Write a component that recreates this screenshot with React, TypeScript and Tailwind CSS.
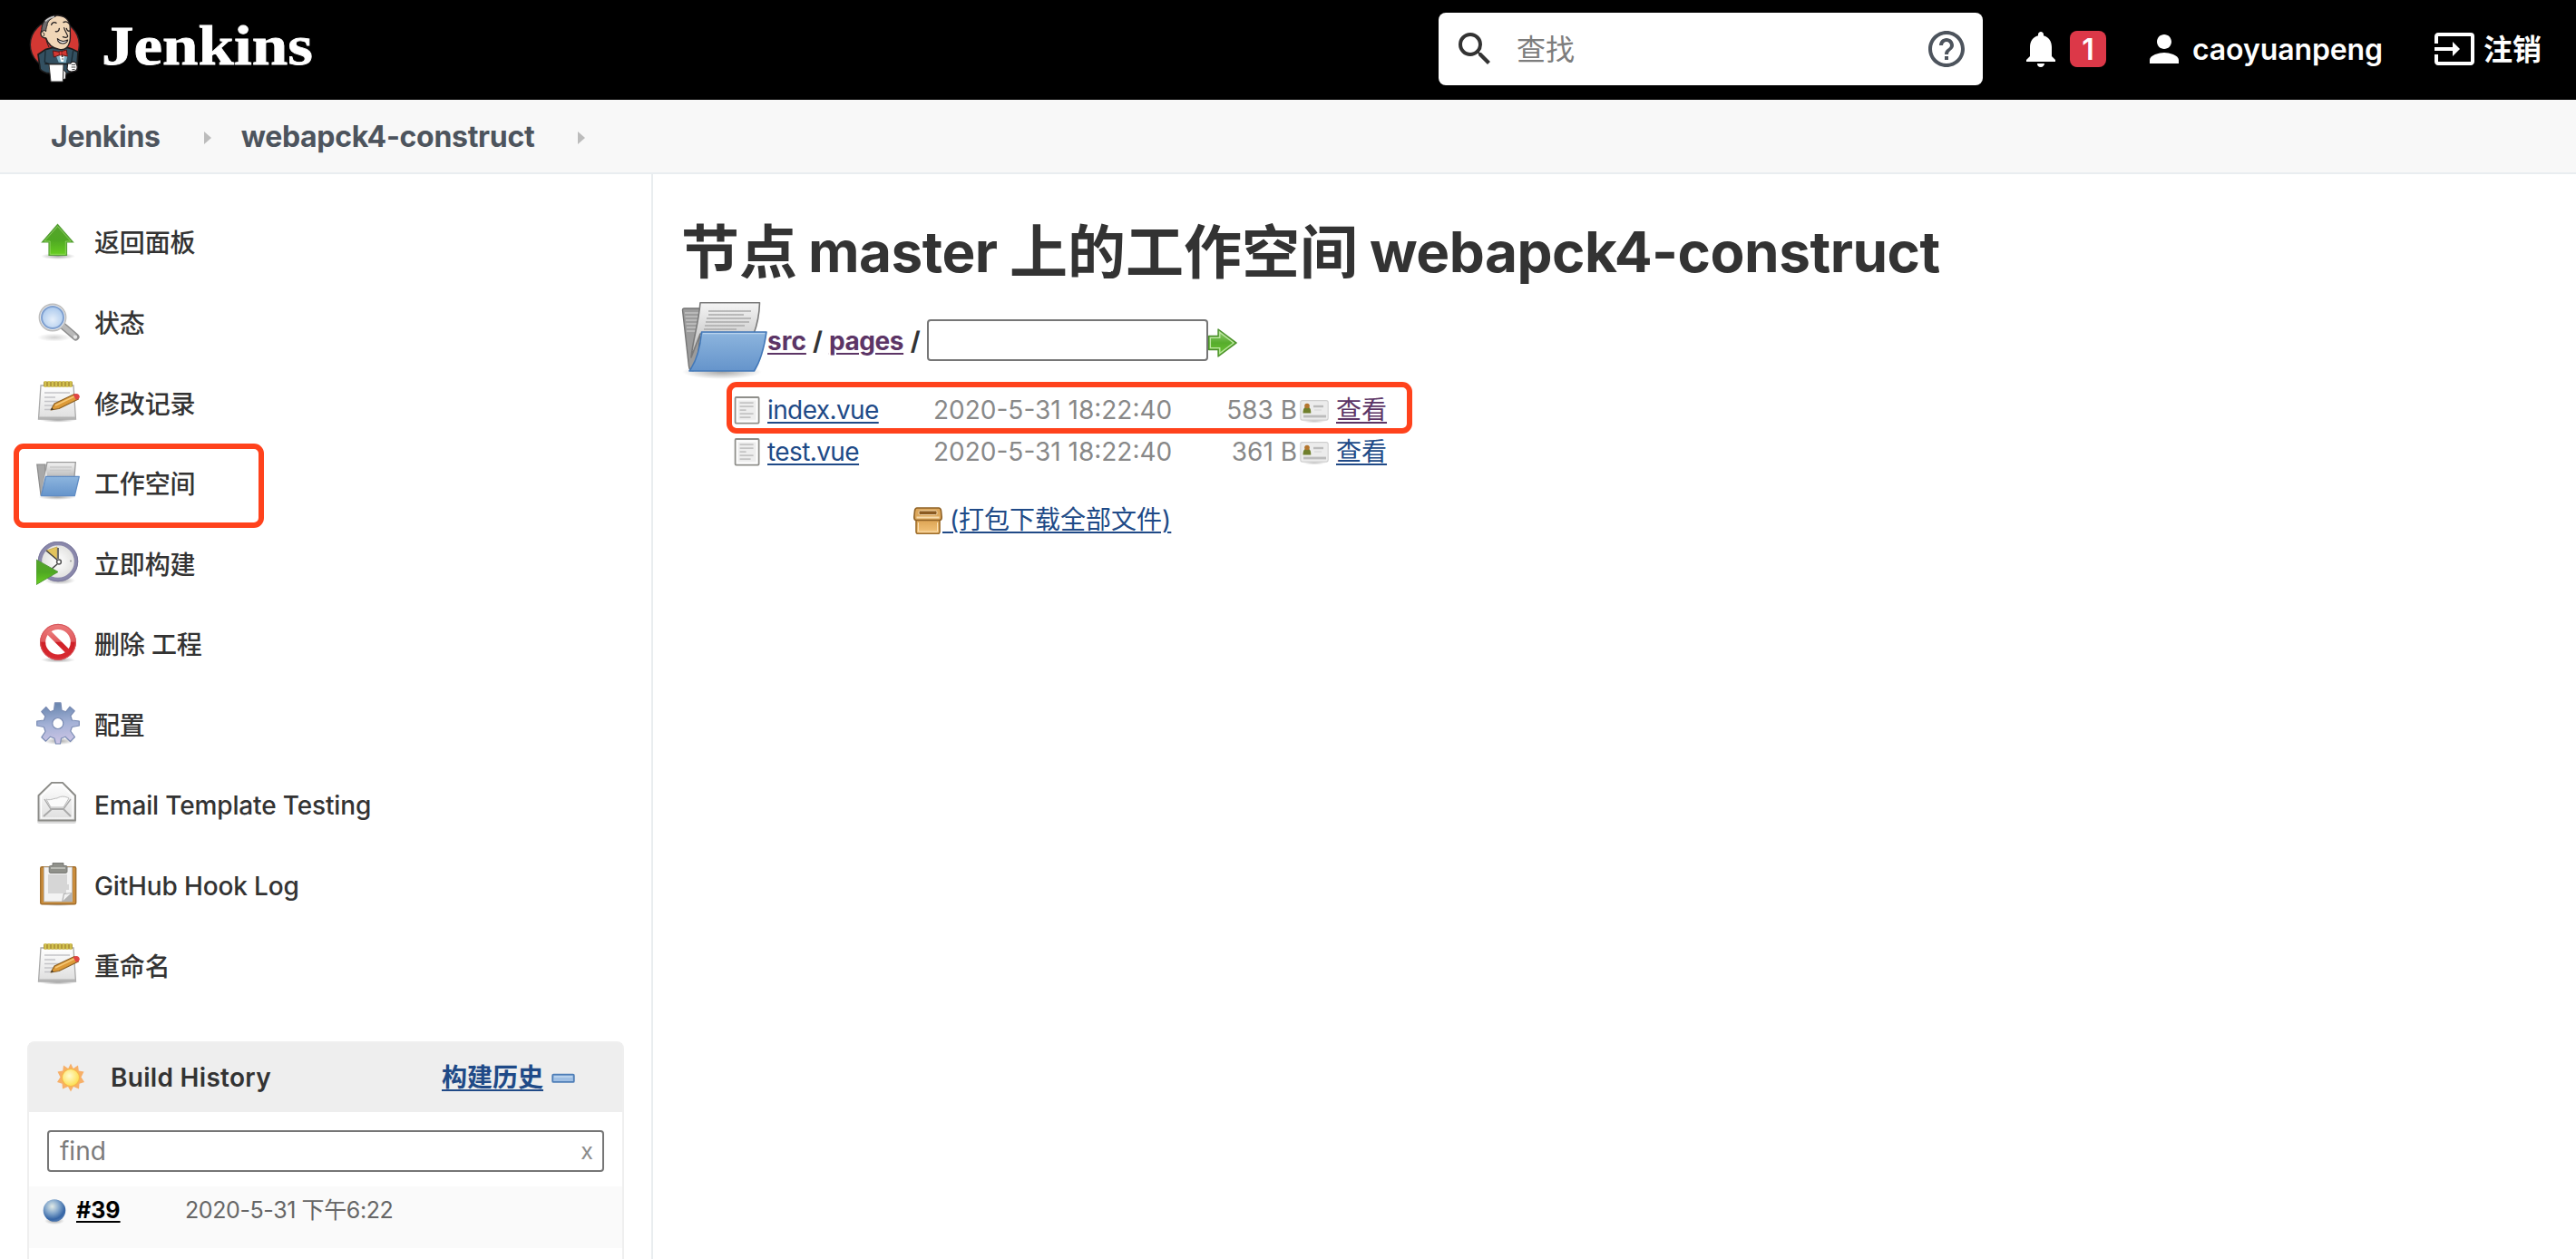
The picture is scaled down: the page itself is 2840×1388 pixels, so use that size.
import type { ReactNode } from "react";
import { MdHelpOutline, MdInput, MdNotifications, MdPerson, MdSearch } from "react-icons/md";

/* ---------- icons ---------- */

function JenkinsLogo() {
  return (
    <svg viewBox="0 0 270 330" className="h-[110px] w-[90px] shrink-0">
      <ellipse cx="121" cy="148" rx="81" ry="80" fill="#d33833" stroke="#231f20" strokeWidth="4" />
      <path d="M66 180 L90 164 L112 158 L165 158 L178 162 L198 172 L194 232 L160 244 L96 242 C84 238 70 230 72 222 Z" fill="#335061" stroke="#1c1c1c" strokeWidth="5" strokeLinejoin="round" />
      <path d="M90 168 L88 205 L102 212 M182 168 L176 206" fill="none" stroke="#1a2b35" strokeWidth="4" />
      <path d="M122 176 L164 180 L158 208 L134 206 Z" fill="#81b0c4" />
      <path d="M136 182 L153 182 L150 204 L142 204 Z" fill="#fff" />
      <circle cx="146" cy="186" r="3" fill="#222" />
      <circle cx="147" cy="195" r="2" fill="#222" />
      <path d="M79 96 C78 66 104 50 132 51 C158 53 173 70 172 98 C172 112 174 126 170 140 C165 158 152 166 136 163 C118 160 100 150 92 126 C82 126 74 120 75 110 C76 102 80 98 84 100 Z" fill="#f0d6b7" stroke="#231f20" strokeWidth="4" strokeLinejoin="round" />
      <path d="M78 106 C76 84 84 66 104 58 C114 54 120 54 124 54 C106 62 96 72 96 84 C94 90 92 94 92 104 L86 100 Z" fill="#6d6b6d" stroke="#231f20" strokeWidth="3" />
      <path d="M90 70 C98 61 108 57 120 55" fill="none" stroke="#c9c9c9" strokeWidth="5" />
      <path d="M82 108 C86 108 88 114 84 120 M92 126 C94 138 98 148 102 156" fill="none" stroke="#231f20" strokeWidth="3" />
      <path d="M110 82 C112 74 120 72 126 76 M150 74 C156 70 164 72 168 78 M124 104 C130 106 136 102 136 94 M160 94 C162 102 166 104 171 102" fill="none" stroke="#231f20" strokeWidth="4" strokeLinecap="round" />
      <path d="M152 92 C154 102 162 112 164 120 C162 126 154 124 148 122" fill="none" stroke="#231f20" strokeWidth="3.5" strokeLinecap="round" />
      <path d="M130 128 C140 138 154 138 164 132 C162 146 140 148 132 136 Z" fill="#fff" stroke="#231f20" strokeWidth="3.5" strokeLinejoin="round" />
      <path d="M115 168 L136 172 L160 165 L163 186 L140 181 L118 189 Z" fill="#d33833" stroke="#5c1512" strokeWidth="3" strokeLinejoin="round" />
      <path d="M136 170 L144 170 L144 183 L136 183 Z" fill="#ef3d3a" stroke="#5c1512" strokeWidth="2" />
      <path d="M88 211 L162 212" stroke="#1c1c1c" strokeWidth="4" />
      <path d="M146 226 L159 240 L157 260 L148 264 Z" fill="#e8e8e8" stroke="#231f20" strokeWidth="3" />
      <path d="M102 213 L150 213 L148 270 L108 270 Z" fill="#fff" stroke="#333" strokeWidth="3" strokeLinejoin="round" />
      <path d="M164 210 C170 208 174 214 176 206 C184 202 192 206 194 214 C198 226 194 236 184 236 C174 238 164 236 162 228 Z" fill="#fff" stroke="#231f20" strokeWidth="3.5" />
      <path d="M176 214 L190 214 M176 222 L190 222 M178 230 L188 229" stroke="#444" strokeWidth="3" />
    </svg>
  );
}

function Svg({ children, box = 48, className = "size-12" }: { children: ReactNode; box?: number; className?: string }) {
  return (
    <svg viewBox={`0 0 ${box} ${box}`} className={`shrink-0 ${className}`}>
      {children}
    </svg>
  );
}

function Gradients() {
  return (
    <svg className="absolute size-0">
      <defs>
        <linearGradient id="green" x1="0" y1="0" x2="0" y2="1"><stop offset="0" stopColor="#55a32c" /><stop offset="0.5" stopColor="#4fa823" /><stop offset="1" stopColor="#68cf20" /></linearGradient>
        <linearGradient id="greenRight" x1="0" y1="0" x2="0" y2="1"><stop offset="0" stopColor="#9ad07c" /><stop offset="0.5" stopColor="#57ad2c" /><stop offset="1" stopColor="#6cc832" /></linearGradient>
        <linearGradient id="blue" x1="0" y1="0" x2="0" y2="1"><stop offset="0" stopColor="#8db5de" /><stop offset="1" stopColor="#6594cb" /></linearGradient>
        <linearGradient id="paper" x1="0" y1="0" x2="0" y2="1"><stop offset="0" stopColor="#ffffff" /><stop offset="1" stopColor="#dedede" /></linearGradient>
        <linearGradient id="sheet" x1="0" y1="0" x2="0" y2="1"><stop offset="0" stopColor="#f4f4f4" /><stop offset="1" stopColor="#b8b8b8" /></linearGradient>
        <linearGradient id="red" x1="0" y1="0" x2="0" y2="1"><stop offset="0" stopColor="#ec7b7b" /><stop offset="0.48" stopColor="#e05a5e" /><stop offset="0.52" stopColor="#cf1f26" /><stop offset="1" stopColor="#d92c33" /></linearGradient>
        <linearGradient id="gear" x1="0.5" y1="0" x2="0.6" y2="1"><stop offset="0" stopColor="#6684ad" /><stop offset="0.5" stopColor="#a3b1d6" /><stop offset="1" stopColor="#cfc6e6" /></linearGradient>
        <linearGradient id="box" x1="0" y1="0" x2="0" y2="1"><stop offset="0" stopColor="#d99f4e" /><stop offset="1" stopColor="#f4c57c" /></linearGradient>
        <radialGradient id="glass" cx="0.5" cy="0.6" r="0.6"><stop offset="0" stopColor="#e6effa" /><stop offset="1" stopColor="#a9c8ec" /></radialGradient>
        <radialGradient id="clock" cx="0.5" cy="0.5" r="0.6"><stop offset="0" stopColor="#ffffff" /><stop offset="1" stopColor="#d9d9d6" /></radialGradient>
        <radialGradient id="ball" cx="0.4" cy="0.32" r="0.68"><stop offset="0" stopColor="#e2ebe6" /><stop offset="0.45" stopColor="#86a9cd" /><stop offset="0.85" stopColor="#3565a5" /><stop offset="1" stopColor="#4d78b0" /></radialGradient>
        <radialGradient id="sun" cx="0.42" cy="0.4" r="0.65"><stop offset="0" stopColor="#fffbd0" /><stop offset="1" stopColor="#fddc45" /></radialGradient>
        <radialGradient id="shadow"><stop offset="0" stopColor="#000" stopOpacity="0.35" /><stop offset="1" stopColor="#000" stopOpacity="0" /></radialGradient>
      </defs>
    </svg>
  );
}

const UpIcon = () => (
  <Svg>
    <ellipse cx="24" cy="40.5" rx="19" ry="3.5" fill="url(#shadow)" />
    <path d="M23.5 5.5 L40.5 25 H33.5 V39.5 H14 V25 H6.5 Z" fill="url(#green)" stroke="#57a037" strokeWidth="1.2" />
    <path d="M23.5 7.5 L38 24 H32.3 V38.3 H15.2 V24 H9 Z" fill="none" stroke="#a8e07c" strokeWidth="1" opacity="0.6" />
  </Svg>
);

const SearchIcon = () => (
  <Svg>
    <ellipse cx="20" cy="41" rx="19" ry="4.5" fill="url(#shadow)" opacity="0.5" />
    <path d="M29 28 L43.5 40.5" stroke="#8e8e8e" strokeWidth="8" strokeLinecap="round" />
    <path d="M29 28 L42 39.2" stroke="#b9b9b9" strokeWidth="5" />
    <circle cx="43" cy="40.5" r="2.2" fill="#e6e6e6" />
    <circle cx="18" cy="19" r="14.6" fill="#f2f2f2" stroke="#bdbdbd" strokeWidth="1.6" />
    <circle cx="18" cy="19" r="12" fill="url(#glass)" stroke="#7fa0d0" strokeWidth="2" />
  </Svg>
);

const NotepadIcon = () => (
  <Svg>
    <ellipse cx="24" cy="44" rx="20" ry="2.8" fill="url(#shadow)" />
    <path d="M5 6 H41 L43.5 43 H2.5 Z" fill="url(#paper)" stroke="#a9a9a9" strokeWidth="1.3" />
    <path d="M3 40.5 H43.3 L43.5 43 H2.5 Z" fill="#b4b4b4" />
    <rect x="8" y="1.5" width="32" height="6" rx="1" fill="#b39a3a" />
    <path d="M10 1 V8 M14 1 V8 M18 1 V8 M22 1 V8 M26 1 V8 M30 1 V8 M34 1 V8 M38 1 V8" stroke="#d9ca55" strokeWidth="1.6" />
    <path d="M9 14 H37 M9 19 H21 M9 23.5 H32 M9 28 H26 M9 32.5 H18" stroke="#c4c4c8" strokeWidth="1.6" />
    <path d="M16 33 L20 26 L42 15.5 L46.5 21 L25 31.5 Z" fill="#dd9a38" stroke="#8b5f22" strokeWidth="1.1" strokeLinejoin="round" />
    <path d="M21 28 L43 17.5" stroke="#f6c877" strokeWidth="1.5" />
    <path d="M40.5 16.3 L43.5 15 C47 14.5 49 18 46.8 20.6 L44 22 Z" fill="#e04545" />
    <path d="M16 33 L17.4 30.4 L19 32.4 Z" fill="#333" />
  </Svg>
);

const FolderIcon = () => (
  <Svg>
    <ellipse cx="23" cy="40" rx="21" ry="3" fill="url(#shadow)" />
    <path d="M0.8 4 H10 V16 L7 38 H5 Z" fill="#a8a8a8" stroke="#8a8a8a" strokeWidth="1.2" />
    <path d="M12 1.6 H43.3 L42 18 H9 Z" fill="url(#sheet)" stroke="#9a9a9a" strokeWidth="1.3" />
    <path d="M15 7 H39 M15 10.5 H38 M14 14 H36" stroke="#c9c9c9" strokeWidth="1.4" />
    <path d="M11 10 L12 17 L6 36 L9 18 Z" fill="#e8e8e8" />
    <path d="M10.5 17.4 H47.3 L42.3 38.6 H5.4 Z" fill="url(#blue)" stroke="#5f8cc4" strokeWidth="1.3" strokeLinejoin="round" />
  </Svg>
);

const BigFolderIcon = () => (
  <Svg box={96} className="size-24">
    <ellipse cx="46" cy="82" rx="44" ry="8" fill="url(#shadow)" />
    <path d="M2.5 14 Q2.5 12 4.5 12 H24 L20 60 L16 80 Q10 82 9.5 76 Z" fill="#9c9c9c" stroke="#737373" strokeWidth="1.4" />
    <path d="M5 17 H22 M5.5 21 H21.5 M6 25 H21 M6.5 29 H20 M7 33 H19 M7 37 H18" stroke="#c2c2c2" strokeWidth="1.4" />
    <path d="M22 5.8 H87.5 Q87 24 81 40 H22 L12 66 C14 46 20 30 22 5.8 Z" fill="url(#sheet)" stroke="#7a7a7a" strokeWidth="1.6" strokeLinejoin="round" />
    <path d="M31 15 H78 M31 19 H70 M29 23 H78 M28 27 H76 M27 31 H71 M26 35 H62" stroke="#aaaaaa" strokeWidth="1.5" />
    <path d="M23.5 38 H95 Q91 66 81.5 81 H10 Q21 66 23.5 38 Z" fill="url(#blue)" stroke="#4378b8" strokeWidth="1.6" strokeLinejoin="round" />
    <path d="M25 39.6 H93" stroke="#b9d3ee" strokeWidth="1.2" />
  </Svg>
);

const ClockIcon = () => (
  <Svg>
    <ellipse cx="26" cy="43" rx="17" ry="4.5" fill="url(#shadow)" />
    <circle cx="24" cy="22" r="20" fill="url(#clock)" stroke="#8a88ab" strokeWidth="4.4" />
    <circle cx="24" cy="22" r="21.7" fill="none" stroke="#77759a" strokeWidth="0.9" />
    <path d="M22.5 19.5 L11 10 L23 6 Z" fill="#e3c45c" stroke="#c7a94c" strokeWidth="0.8" />
    <path d="M11 10 L24 21 M24 7 V19" stroke="#444" strokeWidth="1.5" />
    <circle cx="25" cy="22.5" r="2.4" fill="#fff" stroke="#555" strokeWidth="1.5" />
    <path d="M23 25 L16 31" stroke="#444" strokeWidth="1.6" />
    <circle cx="38" cy="21.5" r="1" fill="#999" />
    <path d="M0 20 L24 33.5 L0 47.5 Z" fill="url(#green)" stroke="#54993a" strokeWidth="1" />
  </Svg>
);

const NoEntryIcon = () => (
  <Svg>
    <ellipse cx="24" cy="42.5" rx="19" ry="3.2" fill="url(#shadow)" />
    <circle cx="24" cy="22.8" r="16.6" fill="#fff" />
    <path d="M24 2.8 A20 20 0 1 0 24 42.8 A20 20 0 1 0 24 2.8 Z M24 9 A13.8 13.8 0 1 1 24 36.6 A13.8 13.8 0 1 1 24 9 Z" fillRule="evenodd" fill="url(#red)" />
    <path d="M11.5 14 L15.5 10 L37 31.5 L33 35.5 Z" fill="url(#red)" />
    <circle cx="24" cy="22.8" r="19.4" fill="none" stroke="#d4555b" strokeWidth="1" />
  </Svg>
);

const GearIcon = () => (
  <Svg>
    <ellipse cx="25" cy="43" rx="17" ry="4" fill="url(#shadow)" />
    <g fill="url(#gear)" stroke="#7b8cb4" strokeWidth="1.2" strokeLinejoin="round">
      <path
        fillRule="evenodd"
        d="M20.5 0.8 H27 L28 9 L32.5 10.8 L37 5.2 L42.2 9.8 L37.8 15 L39.4 20 L47.3 21 V26 L39.4 27.5 L37.8 32 L42.5 38.5 L37.5 43.5 L32 38.2 L27.5 40 L26.5 46 H21.5 L20 40 L15.5 38.2 L10.5 43.2 L5.8 38.8 L10 32.5 L8.4 27.5 L0.7 26 V21 L8.4 20 L10 15.5 L5.8 10.5 L10.8 5.5 L15.5 10.8 L19.5 9 Z M23.8 17.5 A6 6 0 1 0 23.8 29.5 A6 6 0 1 0 23.8 17.5 Z"
      />
    </g>
  </Svg>
);

const MailIcon = () => (
  <Svg>
    <rect x="1" y="41" width="43" height="5" rx="2.5" fill="#000" opacity="0.14" />
    <path d="M2.5 15 L17 0.9 H29 L43 15 V42.5 H2.5 Z" fill="url(#paper)" stroke="#8b8b87" strokeWidth="1.9" strokeLinejoin="round" />
    <path d="M5.5 16 L18 3.5 H28 L40 16 V40 H5.5 Z" fill="none" stroke="#fff" strokeWidth="1.2" />
    <path d="M9 19 L16 30 H30 L38 19" fill="none" stroke="#a9a9a9" strokeWidth="1.3" />
    <path d="M11 19 C15 21 19 18 23 18 C28 15 32 16 36 18 L30 28 H16 Z" fill="#fbfbfb" stroke="#bdbdbd" strokeWidth="1" />
    <path d="M8 38 L17 30 H30 L38 38" fill="none" stroke="#a9a9a9" strokeWidth="1.8" />
  </Svg>
);

const ClipboardIcon = () => (
  <Svg>
    <ellipse cx="24" cy="46" rx="19" ry="2" fill="url(#shadow)" />
    <rect x="4.7" y="4.7" width="39" height="41" rx="1.5" fill="#c98c3c" stroke="#a36f2c" strokeWidth="1.4" />
    <rect x="8.5" y="5" width="31" height="38" fill="#f3f3f3" stroke="#b9b9b9" strokeWidth="0.8" />
    <path d="M13 13 H34 V24 H36 V30 H33 V34 H13 Z" fill="#d6d6d6" />
    <path d="M28 43 L30 34 L39.5 33 V43 Z" fill="#b4b4b4" />
    <path d="M29.5 42 L31 35 L38 34 Z" fill="#f2f2f2" />
    <path d="M18 0.5 H30 V3.5 H33 Q34 3.5 34 5 V10 Q34 11.5 32 11.5 H16 Q14.2 11.5 14.2 10 V5 Q14.2 3.5 15.5 3.5 H18 Z" fill="#8f908a" stroke="#74756f" strokeWidth="0.9" />
    <path d="M16 6 H32" stroke="#b9bab4" strokeWidth="2" />
  </Svg>
);

const FileIcon = () => (
  <Svg box={32} className="size-8">
    <rect x="2.6" y="1" width="26" height="28.6" rx="1" fill="#f6f6f6" stroke="#8f8f8b" strokeWidth="1.8" />
    <rect x="4.6" y="3.2" width="22" height="24.4" fill="none" stroke="#fff" strokeWidth="1.2" />
    <rect x="6.1" y="4.7" width="19" height="21" fill="#ededed" />
    <path d="M7.6 7.2 H22.6 M7.6 11.2 H22.6 M7.6 15.2 H14.6 M7.6 19.2 H22.6 M7.6 23.2 H19.6" stroke="#c4c4c4" strokeWidth="1.7" />
  </Svg>
);

const CardIcon = () => (
  <Svg box={32} className="size-8">
    <ellipse cx="16" cy="27" rx="13" ry="2.6" fill="url(#shadow)" opacity="0.7" />
    <rect x="0.8" y="4.6" width="30.4" height="21.5" rx="2" fill="#ececec" stroke="#cfcfcf" strokeWidth="1.1" />
    <path d="M3.5 18.5 C3.5 13 5.5 11.5 8 11.5 C10.5 11.5 12.3 13 12.3 18.5 Z" fill="#6f7f2c" />
    <circle cx="8" cy="10.5" r="2.8" fill="#b4762f" />
    <path d="M15 11 H26" stroke="#bbb" strokeWidth="2.4" />
    <path d="M16 15 H24" stroke="#d9d9d9" strokeWidth="1.2" />
    <path d="M4 22 H29" stroke="#bcbcbc" strokeWidth="2.8" />
  </Svg>
);

const PackageIcon = () => (
  <Svg box={32} className="size-8">
    <path d="M3 13 H29 V28 Q29 30.3 27 30.3 H5 Q3 30.3 3 28 Z" fill="url(#box)" stroke="#9c6c2b" strokeWidth="1.6" />
    <path d="M4 2 H28 Q30 2 30.5 5 L31.2 12 Q31.2 15.5 29 15.5 H3 Q0.8 15.5 0.8 12 L1.5 5 Q2 2 4 2 Z" fill="#dca75c" stroke="#8f6124" strokeWidth="1.6" />
    <path d="M3.5 12.5 H28.5" stroke="#f7dcae" strokeWidth="2" />
    <rect x="6" y="5" width="20" height="4.6" rx="1.5" fill="#8a5a22" stroke="#f2d7ac" strokeWidth="1" />
    <path d="M5.5 18 V28 H26.5 V18" fill="none" stroke="#fbe0b4" strokeWidth="1" />
  </Svg>
);

const GoIcon = () => (
  <Svg box={32} className="size-8">
    <path d="M0.6 8.5 H11 V1 L31.2 16 L11 31 V23.5 H0.6 Z" fill="url(#greenRight)" stroke="#4b8e2c" strokeWidth="1.3" strokeLinejoin="round" />
    <path d="M2.4 10.4 H12.8 V4.6 L28 16 L12.8 27.4 V21.6 H2.4 Z" fill="none" stroke="#bfe6a4" strokeWidth="1.3" />
  </Svg>
);

const SunIcon = () => (
  <Svg box={32} className="size-8">
    <path
      d="M16 0.5 L18.8 6 L24 2.5 L24.8 8.5 L30.5 9.5 L27.5 15.5 L31 21 L25.5 22.8 L25 28.5 L19 26 L16 31.5 L13 26 L7 28.5 L6.5 22.8 L1 21 L4.5 15.5 L1.5 9.5 L7.2 8.5 L8 2.5 L13.2 6 Z"
      fill="#f7a95b"
      opacity="0.92"
    />
    <circle cx="16" cy="16" r="9.6" fill="url(#sun)" stroke="#f6b84a" strokeWidth="1.2" />
  </Svg>
);

const BallIcon = () => (
  <Svg box={32} className="size-8">
    <ellipse cx="16" cy="27" rx="11" ry="4" fill="url(#shadow)" />
    <circle cx="16" cy="15.5" r="12.3" fill="url(#ball)" />
  </Svg>
);

const CollapseIcon = () => (
  <svg viewBox="0 0 26 12" className="mt-0.5 h-3 w-[26px] shrink-0">
    <rect x="1.2" y="1.7" width="23.6" height="8.2" rx="1" fill="#9fbfe4" stroke="#4d7db6" strokeWidth="1.8" />
    <path d="M3 4 H23" stroke="#c3d8f0" strokeWidth="1.4" />
  </svg>
);

/* ---------- page ---------- */

const tasks = [
  { label: "返回面板", Icon: UpIcon },
  { label: "状态", Icon: SearchIcon },
  { label: "修改记录", Icon: NotepadIcon },
  { label: "工作空间", Icon: FolderIcon, marked: true },
  { label: "立即构建", Icon: ClockIcon },
  { label: "删除 工程", Icon: NoEntryIcon },
  { label: "配置", Icon: GearIcon },
  { label: "Email Template Testing", Icon: MailIcon },
  { label: "GitHub Hook Log", Icon: ClipboardIcon },
  { label: "重命名", Icon: NotepadIcon },
];

const files = [
  { name: "index.vue", date: "2020-5-31 18:22:40", size: "583 B", visited: true },
  { name: "test.vue", date: "2020-5-31 18:22:40", size: "361 B", visited: false },
];

const link = "underline decoration-2 underline-offset-[3px]";

function Header() {
  return (
    <header className="flex h-[110px] items-center bg-black pr-[38px] text-[32px] font-semibold text-white">
      <div className="flex items-center pl-5">
        <JenkinsLogo />
        <svg viewBox="0 0 240 110" className="h-[110px] w-[240px]">
          <text x="2" y="71" textLength="233" lengthAdjust="spacingAndGlyphs" fill="#fff" stroke="#fff" strokeWidth="0.8" fontFamily="'Liberation Serif', serif" fontWeight="700" fontSize="62">
            Jenkins
          </text>
        </svg>
      </div>
      <div className="-mt-0.5 ml-auto flex h-20 w-[600px] items-center rounded-lg bg-white pr-4 pl-4 font-normal">
        <MdSearch className="size-12 text-[#333]" />
        <span className="ml-[22px] grow pt-[3px] text-[#7d7d7d]">查找</span>
        <MdHelpOutline className="size-12 text-[#4d545d]" />
      </div>
      <div className="-mt-0.5 ml-10 flex items-center">
        <MdNotifications className="size-12" />
        <span className="ml-2 flex h-10 w-10 items-center justify-center rounded-lg bg-[#dc3848] pt-0.5 leading-10">1</span>
      </div>
      <div className="-mt-0.5 ml-10 flex items-center">
        <MdPerson className="size-12" />
        <span className="ml-[7px] w-[211px] pt-[3px] tracking-[-0.1px]">caoyuanpeng</span>
      </div>
      <div className="-mt-0.5 ml-[54px] flex items-center">
        <MdInput className="size-12" />
        <span className="ml-2 pt-[3px]">注销</span>
      </div>
    </header>
  );
}

function Crumb({ children }: { children: string }) {
  return (
    <>
      <span className="pt-0.5">{children}</span>
      <svg viewBox="0 0 8 14" className="mr-[33px] ml-[48px] mt-[3px] h-3.5 w-2">
        <path d="M0 0 L8 7 L0 14 Z" fill="#bcbcbc" />
      </svg>
    </>
  );
}

function Sidebar() {
  return (
    <aside className="w-[720px] shrink-0 border-r-2 border-[#e9edef] pt-[30px]">
      <ul>
        {tasks.map(({ label, Icon, marked }, i) => (
          <li key={i} className="relative flex h-[88.57px] items-center pl-10">
            <Icon />
            <span className="ml-4 pt-1.5 font-medium tracking-[-0.15px]">{label}</span>
            {marked && <span className="absolute top-[1.5px] left-[15px] h-[93px] w-[276px] rounded-[11px] border-6 border-[#ff421c]" />}
          </li>
        ))}
      </ul>
      <section className="mt-[40px] ml-[30px] h-[400px] w-[658px] rounded-t-lg border-2 border-[#efefef]">
        <div className="flex h-[76px] items-center bg-[#eee] pr-[52px] pl-[30px] font-semibold">
          <SunIcon />
          <span className="ml-[28px] pt-[3px] tracking-[0.3px]">Build History</span>
          <a className={`${link} mr-[9px] ml-auto pt-[3px] text-[#204a87]`}>构建历史</a>
          <CollapseIcon />
        </div>
        <div className="h-[82px] px-5 pt-5">
          <div className="flex h-[46px] items-center justify-between rounded border-2 border-[#767676] px-2.5">
            <span className="pt-0.5 pl-0.5 text-[#7b7b7b]">find</span>
            <span className="text-[25px] text-[#8c8c8c]">x</span>
          </div>
        </div>
        <div className="flex h-[68px] items-start bg-[#fafafa] pt-[11px] pl-3 text-[25px]">
          <BallIcon />
          <a className="ml-2 w-[119px] text-black underline decoration-2 underline-offset-[3px]">
            <b>#39</b>
          </a>
          <span className="ml-px tracking-[-0.4px] text-[#666]">2020-5-31 下午6:22</span>
        </div>
      </section>
    </aside>
  );
}

function Workspace() {
  return (
    <main className="grow pt-[45px] pl-[30px]">
      <h1 className="flex h-20 items-center pt-[3px] text-[64px] font-semibold">
        <span className="ml-px">节点</span>
        <span className="ml-[12px] w-[222px] text-[62px] font-bold tracking-[-0.5px]">master</span>
        <span>上的工作空间</span>
        <span className="ml-[13px] text-[62px] font-bold tracking-[-0.5px]">webapck4-construct</span>
      </h1>
      <div className="mt-[5px] flex h-[106px] items-center font-bold whitespace-pre">
        <span className="pt-0.5">
          <BigFolderIcon />
        </span>
        <a className={`${link} pt-[3px] text-[#5c3566]`}>src</a>
        <span className="w-[25px] pt-[3px] text-center">/</span>
        <a className={`${link} pt-[3px] tracking-[-0.4px] text-[#5c3566]`}>pages</a>
        <span className="w-[26px] pt-[3px] text-center">/</span>
        <span className="h-[46px] w-[310px] rounded border-2 border-[#767676] bg-white" />
        <span className="pt-1.5">
          <GoIcon />
        </span>
      </div>
      <div className="relative">
        {files.map((f) => (
          <div key={f.name} className="flex h-[46px] items-center pl-[58px]">
            <span className="pt-1">
              <FileIcon />
            </span>
            <a className={`${link} ml-1.5 pt-[3px] tracking-[-0.6px] text-[#204a87]`}>{f.name}</a>
            <span className="ml-auto flex w-[1811px] items-center text-[#888]">
              <span className="w-[272px] pt-[3px]">{f.date}</span>
              <span className="w-[129px] pt-[3px] text-right">{f.size}</span>
              <span className="mt-1 ml-[3px]">
                <CardIcon />
              </span>
              <a className={`${link} ml-2 pt-[3px] ${f.visited ? "text-[#5c3566]" : "text-[#204a87]"}`}>查看</a>
            </span>
          </div>
        ))}
        <span className="absolute top-[-7px] left-[51px] h-[57px] w-[756px] rounded-[11px] border-6 border-[#ff421c]" />
      </div>
      <div className="mt-[30px] flex h-11 items-center pl-[257px]">
        <span className="pt-1">
          <PackageIcon />
        </span>
        <a className={`${link} pt-[3px] whitespace-pre text-[#204a87]`}> (打包下载全部文件)</a>
      </div>
    </main>
  );
}

export default function App() {
  return (
    <div className="flex h-[1388px] w-[2840px] flex-col overflow-hidden bg-white font-['Inter','Noto_Sans_CJK_SC',sans-serif] text-[28px] leading-[1.2] text-[#333]">
      <Gradients />
      <Header />
      <nav className="flex h-[82px] shrink-0 items-center border-b-2 border-[#e9edf0] bg-[#f8f8f8] pl-[56px] text-[32px] font-bold tracking-[-0.3px] text-[#4d545d]">
        <Crumb>Jenkins</Crumb>
        <Crumb>webapck4-construct</Crumb>
      </nav>
      <div className="flex grow">
        <Sidebar />
        <Workspace />
      </div>
    </div>
  );
}
